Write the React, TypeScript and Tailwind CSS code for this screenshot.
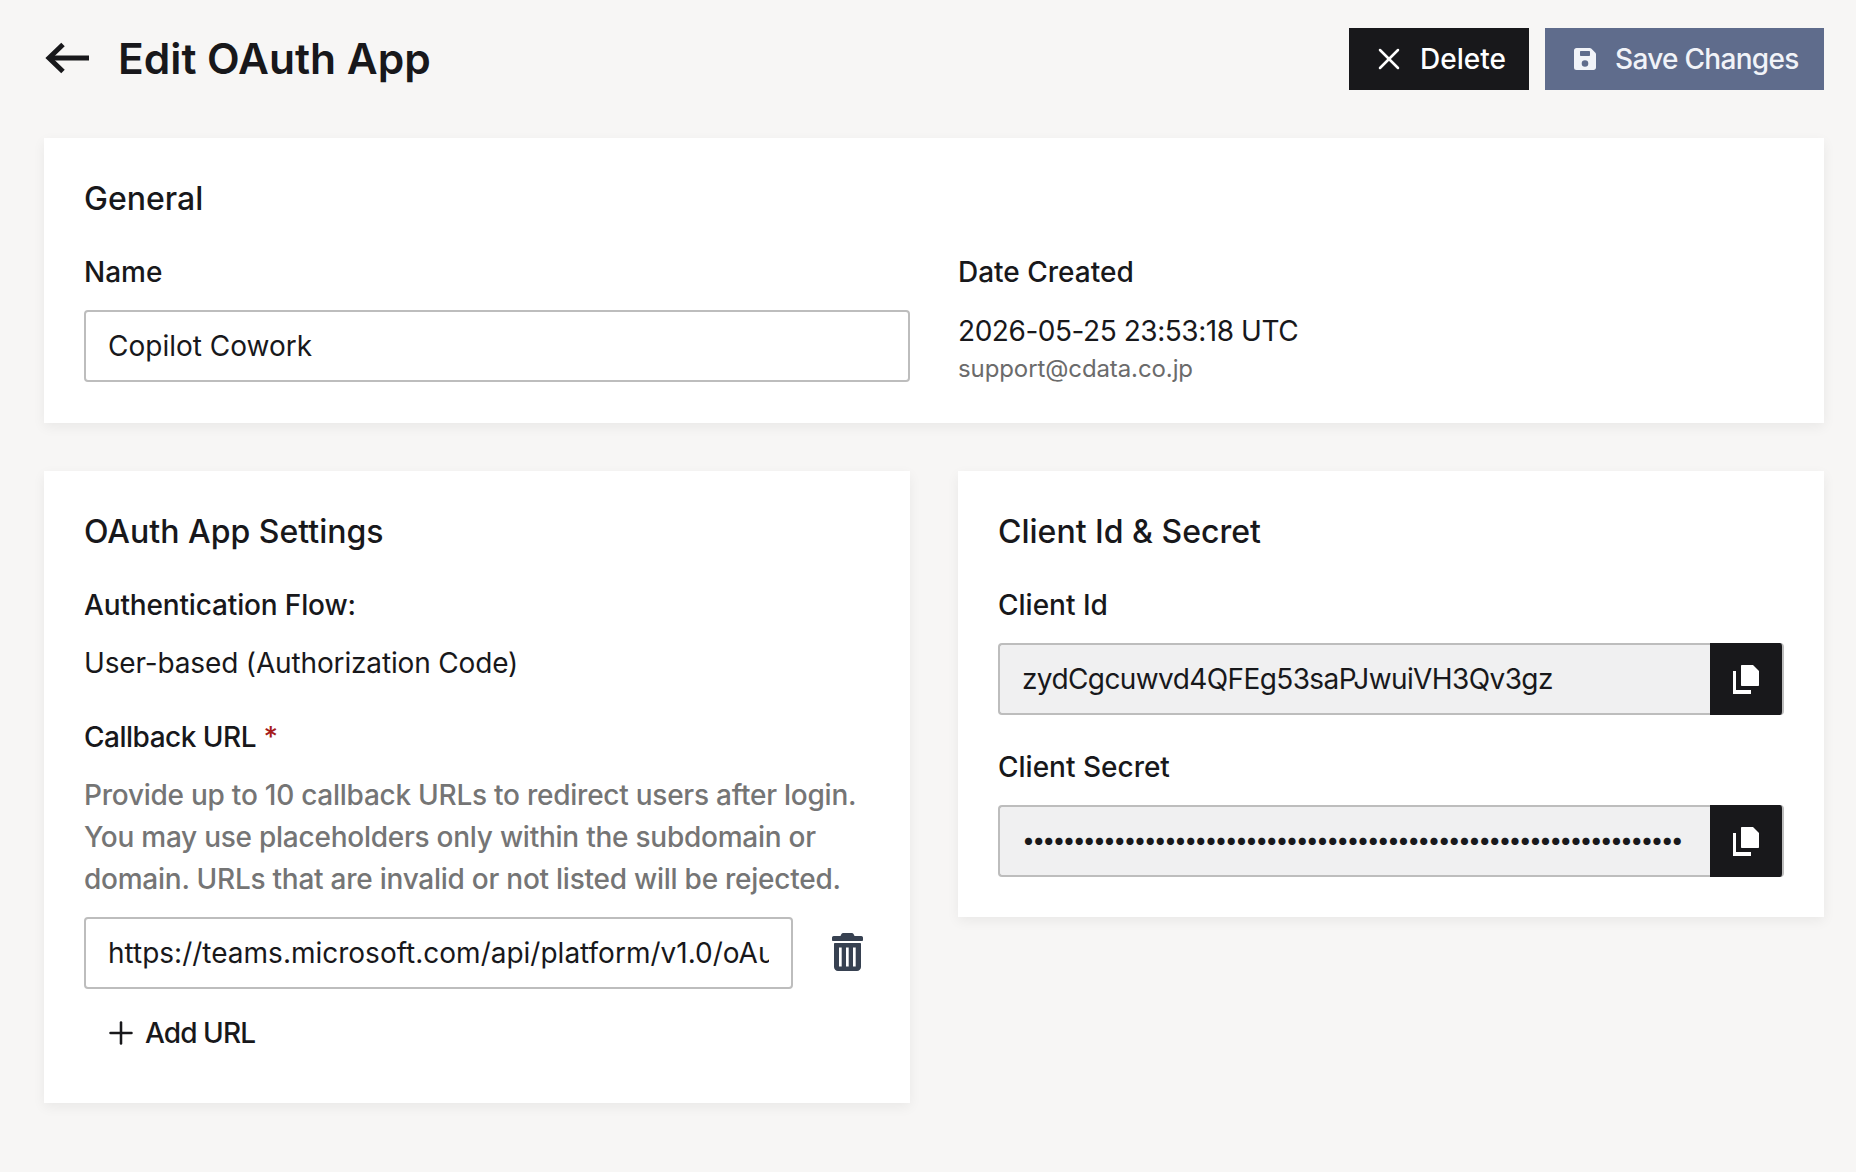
import { Plus, X } from "lucide-react";

const BackArrow = () => (
  <svg viewBox="0 0 45 32" className="w-[45px] h-[32px] -mt-[3px]" fill="none" stroke="currentColor" strokeWidth={5}>
    <path d="M44 16H4" />
    <path d="M18 2.500 4 16l14 13.500" />
  </svg>
);

const SaveIcon = () => (
  <svg viewBox="0 0 22 22" className="w-[22px] h-[22px]" fill="currentColor">
    <path
      fillRule="evenodd"
      d="M2.500 0h13.300c.5 0 1 .2 1.400.6l4.200 4.200c.4.4.6.9.6 1.400v13.300c0 1.400-1.100 2.500-2.500 2.500h-17A2.500 2.500 0 0 1 0 19.500v-17C0 1.100 1.100 0 2.500 0ZM7 3c-.6 0-1 .4-1 1v3c0 .6.4 1 1 1h8c.6 0 1-.4 1-1V4c0-.6-.4-1-1-1H7Zm4 9.200a3.300 3.300 0 1 0 0 6.600 3.300 3.300 0 0 0 0-6.600Z"
    />
  </svg>
);

const CopyIcon = () => (
  <svg viewBox="0 0 26 29" className="w-[26px] h-[29px]" fill="currentColor">
    <path d="M9 0h11l6 6v14c0 .6-.4 1-1 1H9c-.6 0-1-.4-1-1V1c0-.6.4-1 1-1Z" />
    <path d="M0 6h3v19h15v4H0V6Z" />
  </svg>
);

const TrashIcon = () => (
  <svg viewBox="0 0 31 38" className="w-[31px] h-[38px]" fill="#374151">
    <path d="M11 0h9c1 0 1.800.9 2.500 3h6.800c.9 0 1.700.8 1.700 1.700v2.200c0 .6-.5 1.100-1.100 1.100H1.100C.5 8 0 7.500 0 6.900V4.700C0 3.800.8 3 1.700 3h6.800C9.200.9 10 0 11 0Z" />
    <path
      fillRule="evenodd"
      d="M2 11c0-.6.400-1 1-1h25c.6 0 1 .4 1 1v23c0 2.200-1.800 4-4 4H6c-2.200 0-4-1.800-4-4V11Zm5 3.500V33.500h2.700V14.500H7Zm7 0V33.500h2.700V14.500H14Zm7 0V33.500h2.700V14.500H21Z"
    />
  </svg>
);

const inputClass =
  "w-full h-[72px] px-[22px] border-2 border-[#bdbdbd] rounded-[4px] bg-white text-[28px] text-[#18181b] outline-none";
const labelClass = "text-[28px] leading-[42px] font-medium text-[#18181b]";
const headingClass = "text-[32px] leading-[48px] font-medium text-[#18181b]";
const cardClass = "bg-white p-[40px] shadow-[0_4px_12px_rgba(0,0,0,0.06)]";

const SecretField = ({ value, type, textStyle }: { value: string; type: string; textStyle: string }) => (
  <div className="flex h-[72px]">
    <input
      readOnly
      type={type}
      value={value}
      className={`flex-1 min-w-0 h-full px-[22px] border-2 border-r-0 border-[#bdbdbd] rounded-l-[4px] bg-[#f0f0f1] text-[#18181b] outline-none ${textStyle}`}
    />
    <button className="w-[74px] h-full flex items-center justify-center bg-[#18181b] text-white rounded-r-[4px] border-r-2 border-[#bdbdbd]">
      <CopyIcon />
    </button>
  </div>
);

export default function App() {
  return (
    <div className="min-h-[1172px] bg-[#f7f6f5] pl-[44px] pr-[32px] pt-[28px] font-['Inter','Liberation_Sans',sans-serif]">
      <div className="flex items-center justify-between h-[62px]">
        <div className="flex items-center gap-[28px] pl-px text-[#18181b]">
          <BackArrow />
          <h1 className="text-[42.500px] leading-[60px] font-semibold">Edit OAuth App</h1>
        </div>
        <div className="flex gap-[16px]">
          <button className="h-[62px] w-[180px] flex items-center gap-[13px] pl-[22px] bg-[#18181b] text-white text-[28px] font-medium">
            <X className="w-[36px] h-[36px]" strokeWidth={1.7} />
            Delete
          </button>
          <button className="h-[62px] w-[279px] flex items-center gap-[19px] pl-[29px] bg-[#5f6c8c] text-[#f1f3f8] text-[28px] font-medium tracking-[-0.7px]">
            <SaveIcon />
            Save Changes
          </button>
        </div>
      </div>

      <section className={`${cardClass} mt-[48px] pt-[37px] pb-[37px]`}>
        <h2 className={headingClass}>General</h2>
        <div className="grid grid-cols-2 gap-[48px] mt-[28px]">
          <div>
            <div className={labelClass}>Name</div>
            <input readOnly value="Copilot Cowork" className={`${inputClass} mt-[17px]`} />
          </div>
          <div>
            <div className={labelClass}>Date Created</div>
            <div className="mt-[17px] text-[28px] leading-[42px] text-[#18181b] tracking-[-0.45px]">2026-05-25 23:53:18 UTC</div>
            <div className="text-[24px] leading-[34px] text-[#6b6b6b] tracking-[-0.1px]">support@cdata.co.jp</div>
          </div>
        </div>
      </section>

      <div className="grid grid-cols-2 gap-[48px] mt-[48px] items-start">
        <section className={`${cardClass} pt-[37px] pb-[49px]`}>
          <h2 className={headingClass}>OAuth App Settings</h2>
          <div className={`${labelClass} mt-[28px] tracking-[-0.15px]`}>Authentication Flow:</div>
          <div className="mt-[16px] text-[28px] leading-[42px] text-[#18181b] tracking-[-0.15px]">User-based (Authorization Code)</div>
          <div className={`${labelClass} mt-[32px]`}>
            <span className="tracking-[-0.5px]">Callback URL</span> <span className="text-[#a61b1b]">*</span>
          </div>
          <p className="mt-[16px] text-[28px] leading-[42px] font-medium text-[#757575] tracking-[-0.25px]">
            Provide up to 10 callback URLs to redirect users after login. You may use placeholders only within the
            subdomain or domain. URLs that are invalid or not listed will be rejected.
          </p>
          <div className="flex items-center mt-[17px]">
            <input
              readOnly
              value="https://teams.microsoft.com/api/platform/v1.0/oAuthRedirect"
              className="w-[709px] h-[72px] px-[22px] border-2 border-[#bdbdbd] rounded-[4px] bg-white text-[28px] text-[#18181b] outline-none"
            />
            <button className="ml-[39px] -mt-[2px]">
              <TrashIcon />
            </button>
          </div>
          <button className="flex items-center gap-[6px] mt-[23px] ml-[19px] text-[28px] leading-[42px] font-medium text-[#18181b] tracking-[-0.9px]">
            <Plus className="w-[36px] h-[36px]" strokeWidth={1.7} />
            Add URL
          </button>
        </section>

        <section className={`${cardClass} pt-[37px]`}>
          <h2 className={headingClass}>Client Id &amp; Secret</h2>
          <div className={`${labelClass} mt-[28px]`}>Client Id</div>
          <div className="mt-[17px]">
            <SecretField type="text" textStyle="text-[28px] tracking-[-0.6px]" value="zydCgcuwvd4QFEg53saPJwuiVH3Qv3gz" />
          </div>
          <div className={`${labelClass} mt-[31px]`}>Client Secret</div>
          <div className="mt-[17px]">
            <SecretField
              type="password"
              textStyle="text-[23px] pb-[2px] tracking-[-2.8px]"
              value="zydCgcuwvd4QFEg53saPJwuiVH3Qv3gzzydCgcuwvd4QFEg53saPJwuiVH3Qv3gzz"
            />
          </div>
        </section>
      </div>
    </div>
  );
}
